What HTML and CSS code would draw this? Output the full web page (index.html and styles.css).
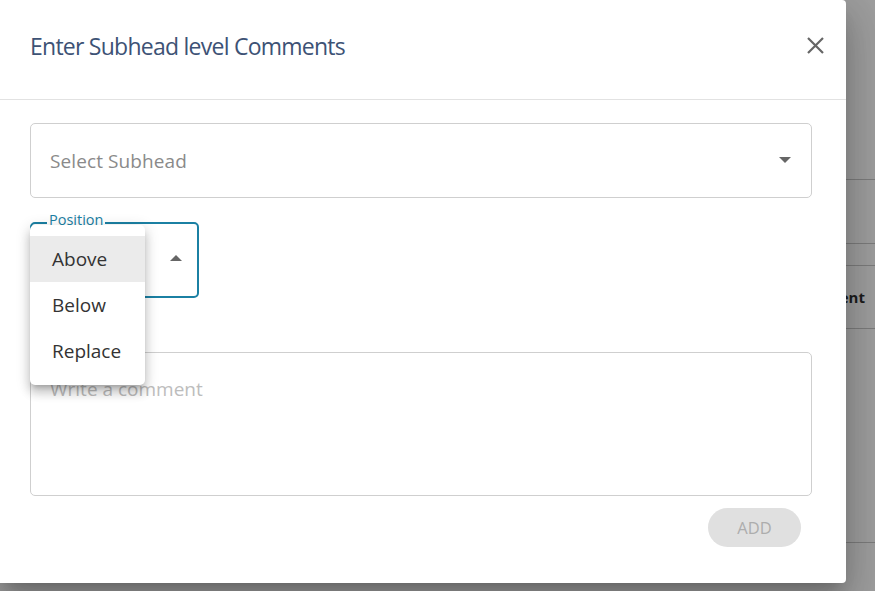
FILE: index.html
```html
<!DOCTYPE html>
<html lang="en">
<head>
<meta charset="utf-8">
<title>Enter Subhead level Comments</title>
<link rel="stylesheet" href="styles.css">
</head>
<body>
<div class="backdrop">
  <div class="bg-row r1"></div>
  <div class="bg-row r2"></div>
  <div class="bg-row r3"></div>
  <div class="bg-row r4"><span class="bg-cell">Comment</span></div>
  <div class="bg-row r5"></div>
  <div class="bg-row r6"></div>
</div>

<div class="dialog" role="dialog">
  <div class="dialog-header">
    <h2 class="dialog-title">Enter Subhead level Comments</h2>
    <button class="close-btn" aria-label="close">
      <svg width="17" height="17" viewBox="0 0 17 17"><path d="M1 1 L16 16 M16 1 L1 16" stroke="#666" stroke-width="2.2" stroke-linecap="butt" fill="none"/></svg>
    </button>
  </div>
  <div class="dialog-body">
    <div class="select-field">
      <span class="placeholder">Select Subhead</span>
      <span class="caret-down"></span>
    </div>

    <div class="position-wrap">
      <div class="position-field">
        <span class="pos-label">Position</span>
        <span class="caret-up"></span>
      </div>
      <ul class="menu">
        <li class="menu-item selected">Above</li>
        <li class="menu-item">Below</li>
        <li class="menu-item">Replace</li>
      </ul>
    </div>

    <div class="comment-box">
      <span class="comment-ph">Write a comment</span>
    </div>

    <div class="actions">
      <button class="add-btn" disabled>ADD</button>
    </div>
  </div>
</div>
</body>
</html>
```

FILE: styles.css
```css
* { box-sizing: border-box; }
html, body {
  margin: 0;
  padding: 0;
  width: 875px;
  height: 591px;
  overflow: hidden;
}
body {
  background: #9e9e9e;
  font-family: "Open Sans", "Noto Sans", sans-serif;
  position: relative;
}

/* underlying page (dimmed) */
.backdrop {
  display: flex;
  flex-direction: column;
  width: 875px;
}
.bg-row {
  border-bottom: 1px solid #7c7c7c;
  display: flex;
  align-items: center;
  justify-content: flex-end;
}
.r1 { height: 180px; }
.r2 { height: 64px; }
.r3 { height: 22px; }
.r4 { height: 63px; }
.r5 { height: 214px; }
.r6 { height: 60px; border-bottom: none; }
.bg-cell {
  font-weight: 700;
  font-size: 15px;
  color: #1c1c1c;
  padding-right: 10px;
}

/* dialog */
.dialog {
  position: absolute;
  left: 0;
  top: 0;
  width: 846px;
  height: 583px;
  background: #fff;
  border-radius: 0 4px 4px 0;
  box-shadow: 0 11px 15px -7px rgba(0,0,0,.2), 0 24px 38px 3px rgba(0,0,0,.14), 0 9px 46px 8px rgba(0,0,0,.12);
  display: flex;
  flex-direction: column;
}
.dialog-header {
  height: 100px;
  border-bottom: 1px solid #e2e2e2;
  display: flex;
  align-items: flex-start;
  justify-content: space-between;
  padding: 30px 19px 0 30px;
}
.dialog-title {
  margin: 0;
  font-weight: 400;
  font-size: 23px;
  letter-spacing: -0.75px;
  line-height: 32px;
  color: #3d5275;
}
.close-btn {
  margin-top: 3px;
  width: 24px;
  height: 24px;
  padding: 0;
  border: none;
  background: transparent;
  display: flex;
  align-items: center;
  justify-content: center;
}

.dialog-body {
  padding: 23px 34px 0 30px;
  display: flex;
  flex-direction: column;
}

.select-field {
  height: 75px;
  border: 1px solid #cfcfcf;
  border-radius: 5px;
  display: flex;
  align-items: center;
  justify-content: space-between;
  padding: 0 20px 0 19px;
}
.placeholder {
  font-size: 19px;
  color: #8a8a8a;
  letter-spacing: 0.1px;
}
.caret-down {
  width: 0;
  height: 0;
  border-left: 6.5px solid transparent;
  border-right: 6.5px solid transparent;
  border-top: 6.5px solid #666;
  margin-top: -2px;
}

.position-wrap {
  position: relative;
  margin-top: 24px;
  width: 169px;
}
.position-field {
  position: relative;
  height: 76px;
  border: 2px solid #1b80a3;
  border-radius: 5px;
  display: flex;
  align-items: center;
  justify-content: flex-end;
  padding-right: 15px;
}
.pos-label {
  position: absolute;
  left: 15px;
  top: -13px;
  padding: 0 2px;
  background: #fff;
  font-size: 14.5px;
  line-height: 18px;
  color: #1b80a3;
}
.caret-up {
  width: 0;
  height: 0;
  border-left: 6.5px solid transparent;
  border-right: 6.5px solid transparent;
  border-bottom: 6.5px solid #666;
  margin-top: -4px;
}

.menu {
  position: absolute;
  left: 0;
  top: 3px;
  width: 115px;
  margin: 0;
  padding: 11px 0;
  list-style: none;
  background: #fff;
  border-radius: 5px;
  box-shadow: 0 5px 5px -3px rgba(0,0,0,.2), 0 8px 10px 1px rgba(0,0,0,.14), 0 3px 14px 2px rgba(0,0,0,.12);
  z-index: 2;
}
.menu-item {
  height: 46px;
  display: flex;
  align-items: center;
  padding-left: 22px;
  font-size: 19px;
  color: #333;
}
.menu-item.selected {
  background: #ebebeb;
}

.comment-box {
  margin-top: 54px;
  height: 144px;
  border: 1px solid #cfcfcf;
  border-radius: 5px;
  padding: 23px 19px 0;
}
.comment-ph {
  font-size: 19px;
  line-height: 26px;
  color: #bdbdbd;
}

.actions {
  display: flex;
  justify-content: flex-end;
  margin-top: 12px;
  padding-right: 11px;
}
.add-btn {
  width: 93px;
  height: 39px;
  border: none;
  border-radius: 20px;
  background: #e0e0e0;
  color: #adadad;
  font-family: "Open Sans", sans-serif;
  font-size: 16.5px;
  padding: 0;
}
```
